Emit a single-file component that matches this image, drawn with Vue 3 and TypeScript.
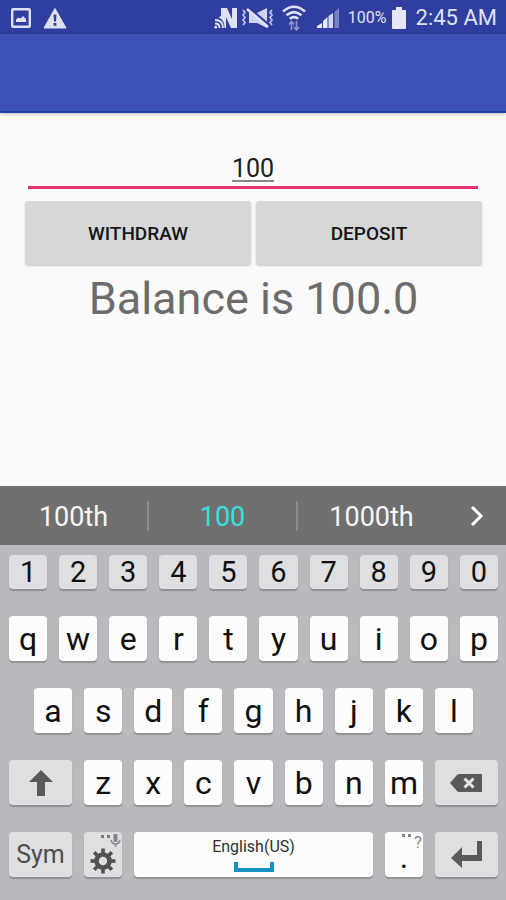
<script setup lang="ts">
import { ref } from 'vue'

const amount = ref('100')
const balance = ref(100)

const digits = [...'1234567890']
const topLetters = [...'qwertyuiop']
const homeLetters = [...'asdfghjkl']
const bottomLetters = [...'zxcvbnm']

const cogAngles = [0, 45, 90, 135, 180, 225, 270, 315]

function type(key: string): void {
  amount.value += key
}

function erase(): void {
  amount.value = amount.value.slice(0, -1)
}

function change(sign: 1 | -1): void {
  balance.value += sign * (Number(amount.value) || 0)
}
</script>

<template>
  <div class="screen">
    <header class="status">
      <div class="status-group notices">
        <svg width="20" height="20" viewBox="0 0 20 20" aria-hidden="true">
          <rect x="1.2" y="1.2" width="17.6" height="17.6" rx="1" fill="none" stroke="#dfe1f5" stroke-width="2.4" />
          <path d="M5 14v-2.500l2.500-2 2 1 2.500-2.500 3 3v3z" fill="#dfe1f5" />
        </svg>
        <svg width="24" height="22" viewBox="0 0 24 22" aria-hidden="true">
          <path d="M12 1.500 23 21H1z" fill="#dfe1f5" stroke="#dfe1f5" stroke-linejoin="round" />
          <path d="M10.500 7.500h3l-.5 7h-2zM10.600 16h2.800v2.800h-2.800z" fill="#303f9f" />
        </svg>
      </div>
      <div class="status-group">
        <svg width="24" height="22" viewBox="0 0 24 22" aria-hidden="true">
          <path d="M7 1h6l5 11V1h5v20h-6L12 10v11h-1.500C10.500 15 8 11.500 4.500 10.500L7 9z" fill="#dfe1f5" />
          <g fill="none" stroke="#dfe1f5" stroke-width="1.800">
            <path d="M1 13c5 0 8 3 8 8M1 16.500c3 0 4.500 1.500 4.500 4.500" />
          </g>
          <circle cx="1.800" cy="20.200" r="1.400" fill="#dfe1f5" />
        </svg>
        <svg class="vibrate" width="34" height="22" viewBox="0 0 34 22" aria-hidden="true">
          <path d="M8 6h8l10-5v20l-10-5H8z" fill="#cfd3ef" />
          <path d="m7 0 21 18" stroke="#303f9f" stroke-width="2.500" />
          <path d="m6 2 21 18" stroke="#dfe1f5" stroke-width="2.600" />
          <path d="m2 3 2 2.500L2 8l2 2.500L2 13l2 2.500L2 18M31 3l-2 2.500L31 8l-2 2.500 2 2.500-2 2.500 2 2.500" fill="none" stroke="#b9bfe6" stroke-width="1.800" />
        </svg>
        <svg class="wifi" width="24" height="26" viewBox="0 0 24 26" aria-hidden="true">
          <g fill="none" stroke="#dfe1f5" stroke-width="2.600">
            <path d="M1 6.500Q12-3 23 6.500M4.500 10.300q7.500-6.300 15 0M7.800 13.800q4.200-3.500 8.400 0" />
          </g>
          <path d="M9.500 25v-8M7 19.500l2.500-3 2.500 3M14.500 16v8M12 22l2.500 3 2.500-3" fill="none" stroke="#8c95d0" stroke-width="1.600" />
        </svg>
        <svg class="signal" width="24" height="22" viewBox="0 0 24 22" aria-hidden="true">
          <path d="M0 21v-2l5-3v5zM6 21v-7l4.500-4v11z" fill="#e6e8f8" />
          <path d="M11.500 21V9L16 6v15z" fill="#d3d6f0" />
          <path d="M17.500 21V5L22 1v20z" fill="#7680c4" />
        </svg>
        <span class="percent">100%</span>
        <svg class="battery" width="16" height="22" viewBox="0 0 16 22" aria-hidden="true">
          <path d="M5 0h6v3h3q1 0 1 1v17q0 1-1 1H2q-1 0-1-1V4q0-1 1-1h3z" fill="#e6e8f8" />
        </svg>
        <time class="clock">2:45 AM</time>
      </div>
    </header>
    <div class="app-bar"></div>

    <main class="content">
      <input v-model="amount" class="amount" type="text" inputmode="decimal" aria-label="Amount" />
      <div class="actions">
        <button type="button" class="action" @click="change(-1)">WITHDRAW</button>
        <button type="button" class="action" @click="change(1)">DEPOSIT</button>
      </div>
      <p class="balance">Balance is {{ balance.toFixed(1) }}</p>
    </main>

    <section class="suggestions" aria-label="Suggestions">
      <button type="button" class="suggestion">100th</button>
      <button type="button" class="suggestion current">100</button>
      <button type="button" class="suggestion">1000th</button>
      <button type="button" class="more" aria-label="More suggestions">
        <svg width="14" height="22" viewBox="0 0 14 22" aria-hidden="true">
          <path d="m2 2 9 9-9 9" fill="none" stroke="#fff" stroke-width="3" />
        </svg>
      </button>
    </section>

    <section class="keyboard" aria-label="Keyboard">
      <div class="row">
        <button v-for="k in digits" :key="k" type="button" class="key gray digit" @click="type(k)">{{ k }}</button>
      </div>
      <div class="row">
        <button v-for="k in topLetters" :key="k" type="button" class="key" @click="type(k)">{{ k }}</button>
      </div>
      <div class="row home">
        <button v-for="k in homeLetters" :key="k" type="button" class="key" @click="type(k)">{{ k }}</button>
      </div>
      <div class="row">
        <button type="button" class="key gray wide" aria-label="Shift">
          <svg width="24" height="26" viewBox="0 0 24 26" aria-hidden="true">
            <path d="M12 0 24 12h-8v14H8V12H0z" fill="#58595a" />
          </svg>
        </button>
        <button v-for="k in bottomLetters" :key="k" type="button" class="key" @click="type(k)">{{ k }}</button>
        <button type="button" class="key gray wide" aria-label="Backspace" @click="erase">
          <svg width="32" height="18" viewBox="0 0 32 18" aria-hidden="true">
            <path d="M0 9 6.500 1.500Q7.500 0 9.500 0H32v18H9.500q-2 0-3-1.500z" fill="#58595a" />
            <path d="m14.500 4.500 9 9m0-9-9 9" stroke="#e3e5e7" stroke-width="3" />
          </svg>
        </button>
      </div>
      <div class="row">
        <button type="button" class="key gray wide sym">Sym</button>
        <button type="button" class="key gray" aria-label="Keyboard settings">
          <svg class="cog" width="26" height="26" viewBox="-13 -13 26 26" aria-hidden="true">
            <rect v-for="a in cogAngles" :key="a" x="-1.800" y="-12.500" width="3.600" height="6" fill="#505152" :transform="`rotate(${a})`" />
            <circle r="6.500" fill="none" stroke="#505152" stroke-width="4.600" />
          </svg>
          <svg class="hint" width="21" height="15" viewBox="0 0 21 15" aria-hidden="true">
            <path d="M1 2h3v3H1zM7 2h3v3H7z" fill="#77797b" />
            <rect x="13.500" y="1" width="4" height="8" rx="1" fill="#85878a" />
            <path d="M11 7q1 4 4.500 4T20 7M15.500 11v3" fill="none" stroke="#85878a" stroke-width="1.500" />
          </svg>
        </button>
        <button type="button" class="key space" @click="type(' ')">
          <span>English(US)</span>
          <svg width="40" height="10" viewBox="0 0 40 10" aria-hidden="true">
            <path d="M2 0v8h36V0" fill="none" stroke="#1593c6" stroke-width="4" />
          </svg>
        </button>
        <button type="button" class="key period" @click="type('.')">
          <span>.</span>
          <span class="hint alternate">
            <svg width="10" height="12" viewBox="0 0 10 12" aria-hidden="true">
              <path d="M0 1h3v3H0zM6 1h3v3H6z" fill="#85878a" />
            </svg>
            <span>?</span>
          </span>
        </button>
        <button type="button" class="key gray wide" aria-label="Enter">
          <svg width="32" height="28" viewBox="0 0 32 28" aria-hidden="true">
            <path d="M0 17 11 6v8h15V0h5v20H11v7z" fill="#58595a" />
          </svg>
        </button>
      </div>
    </section>
  </div>
</template>

<style>
body {
  margin: 0;
}
</style>

<style scoped>
.screen {
  display: flex;
  flex-direction: column;
  min-height: 100vh;
  background: #fafafa;
  font-family: Roboto, "Liberation Sans", sans-serif;
}

button {
  margin: 0;
  padding: 0;
  border: 0;
  font-family: inherit;
  cursor: pointer;
}

svg {
  display: block;
  flex: none;
}

.status {
  box-sizing: border-box;
  display: flex;
  align-items: center;
  justify-content: space-between;
  height: 34px;
  padding: 2px 9px 0 11px;
  background: #303f9f;
  border-bottom: 1px solid #2c3a8c;
  color: #dfe1f5;
}

.status-group {
  display: flex;
  align-items: center;
}

.notices {
  gap: 12px;
}

.vibrate {
  margin-left: 3px;
}

.wifi {
  margin: 0 11px 0 7px;
}

.percent {
  margin-left: 7px;
  font-size: 16px;
}

.battery {
  margin: 0 9px 0 4px;
}

.clock {
  font-size: 22px;
}

.app-bar {
  height: 77px;
  background: #3f51b5;
  border-bottom: 2px solid #2140a4;
  box-shadow: 0 1px 3px rgba(0, 0, 0, 0.25);
}

.content {
  flex: 1;
  padding: 37px 24px 0 25px;
}

.amount {
  display: block;
  box-sizing: border-box;
  width: calc(100% - 7px);
  height: 39px;
  margin: 0 3px;
  padding: 0;
  border: 0;
  border-bottom: 3px solid #e6316f;
  border-radius: 0;
  outline: 0;
  background: transparent;
  color: #202020;
  font: 25px Roboto, "Liberation Sans", sans-serif;
  text-align: center;
  text-decoration: underline;
  text-decoration-color: #888;
  text-decoration-thickness: 2px;
  text-underline-offset: 3px;
}

.actions {
  display: flex;
  gap: 5px;
  margin-top: 12px;
}

.action {
  flex: 1;
  height: 64px;
  border-radius: 3px;
  background: #d6d8d7;
  box-shadow: 0 1px 2px rgba(0, 0, 0, 0.2);
  color: #151515;
  font-size: 19px;
  font-weight: 500;
}

.balance {
  margin: 7px 0 0;
  color: #6c6c6c;
  font-size: 45px;
  line-height: 54px;
  text-align: center;
}

.suggestions {
  display: flex;
  align-items: center;
  height: 59px;
  background: #707070;
}

.suggestion {
  flex: 1;
  height: 30px;
  border-right: 2px solid #8c8c8c;
  background: transparent;
  color: #f6f6f6;
  font-size: 27px;
}

.suggestion:nth-child(3) {
  border-right-color: transparent;
}

.current {
  color: #35e2dc;
}

.more {
  display: flex;
  justify-content: center;
  width: 59px;
  background: transparent;
}

.keyboard {
  display: flex;
  flex-direction: column;
  gap: 27px;
  padding: 10px 8px 23px 9px;
  background: #b8babd;
}

.row {
  display: flex;
  gap: 12px;
}

.home {
  padding: 0 25px;
}

.key {
  position: relative;
  display: flex;
  flex: 1;
  align-items: center;
  justify-content: center;
  min-width: 0;
  height: 45px;
  border-radius: 4px;
  background: #fcfcfc;
  box-shadow: 0 2px 1px #909295;
  color: #101010;
  font-size: 32px;
  line-height: 36px;
}

.gray {
  background: #dddfe1;
}

.digit {
  height: 34px;
  font-size: 29px;
}

.wide {
  flex: 0 0 63px;
}

.sym {
  color: #4c4d4e;
  font-size: 25px;
}

.cog {
  margin-top: 12px;
}

.hint {
  position: absolute;
  top: 1px;
  right: 1px;
}

.alternate {
  display: flex;
  gap: 2px;
  color: #85878a;
  font-size: 17px;
  line-height: 18px;
}

.space {
  flex: 0 1 239px;
  flex-direction: column;
  gap: 5px;
  color: #303030;
  font-size: 16px;
  line-height: 20px;
}

.period {
  padding-top: 4px;
}
</style>
